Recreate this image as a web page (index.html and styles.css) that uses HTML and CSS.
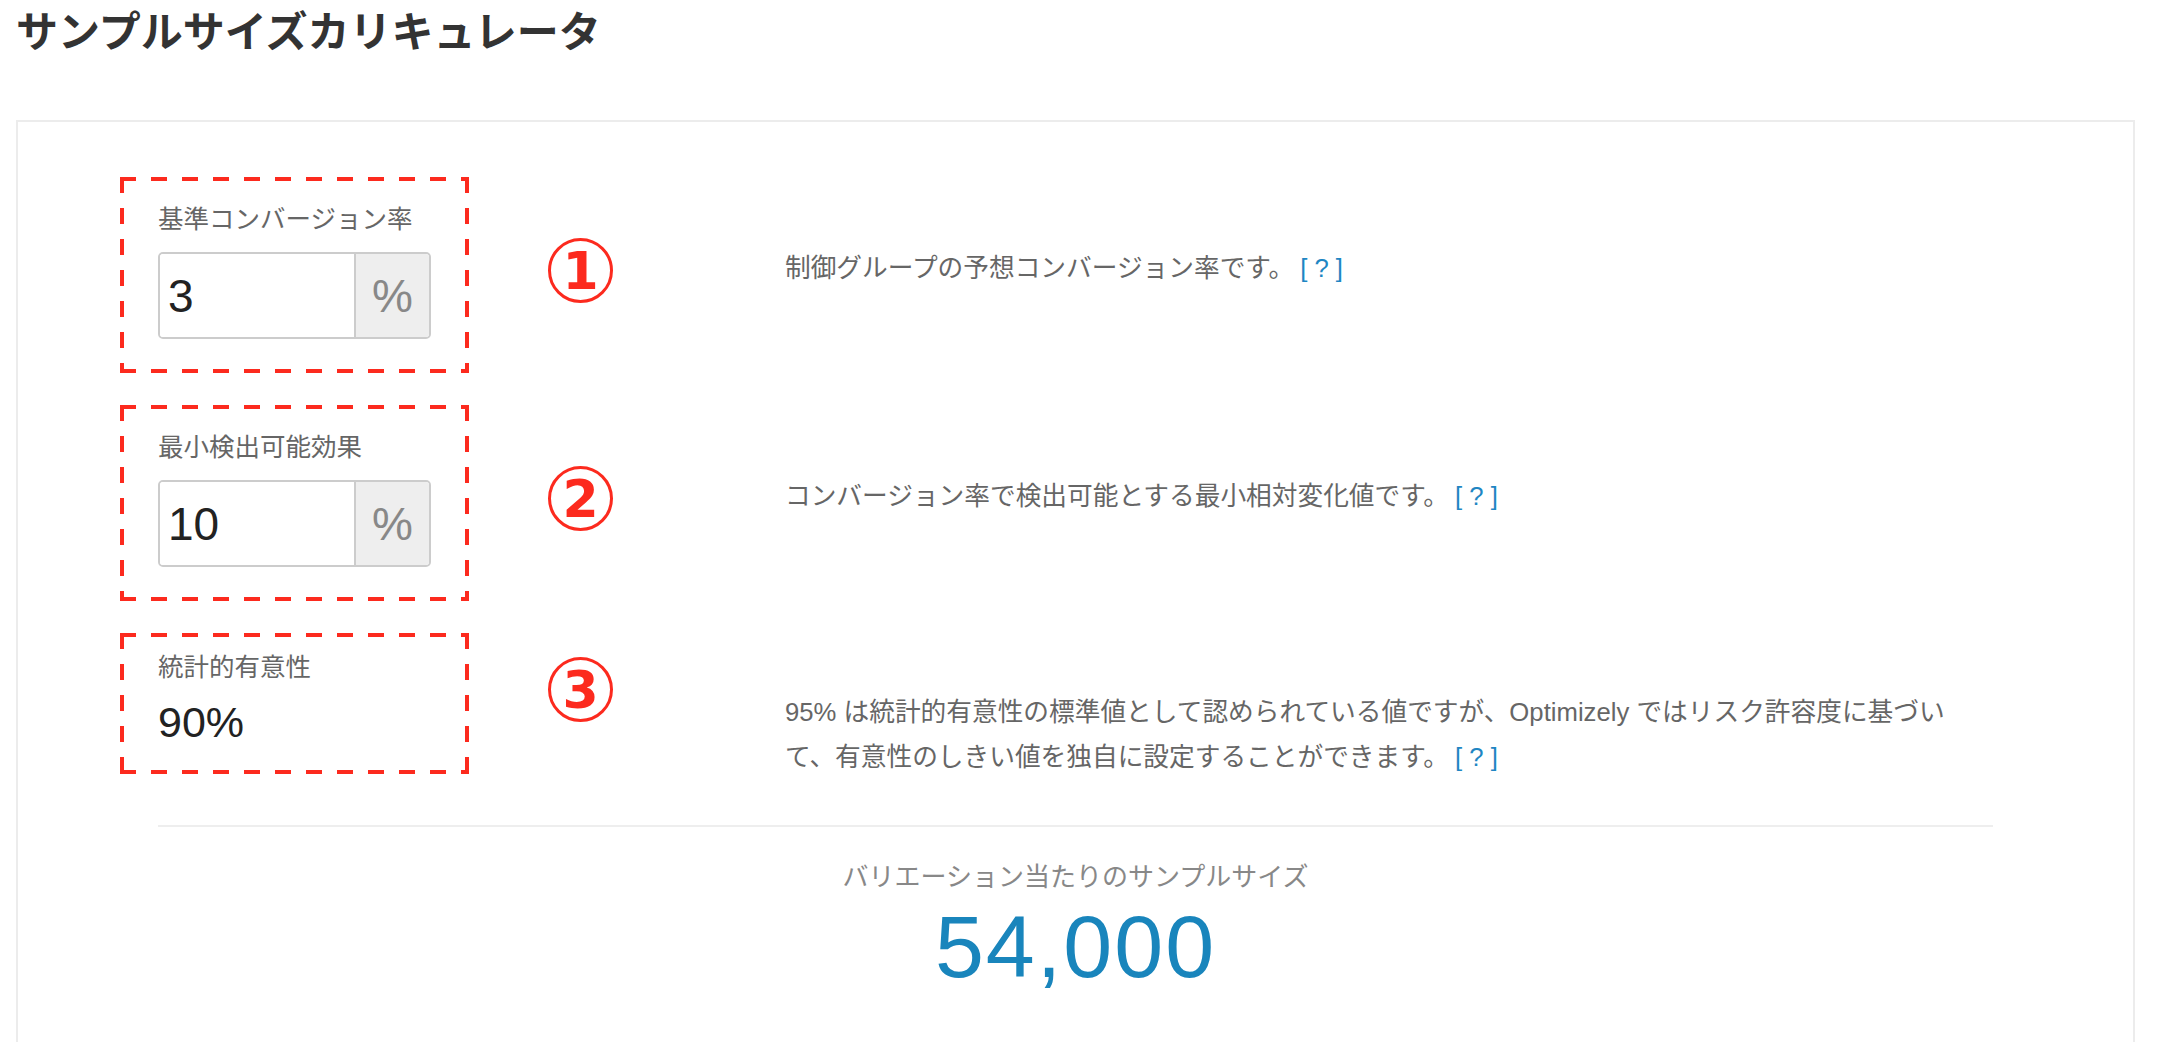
FILE: index.html
```html
<!DOCTYPE html>
<html lang="ja">
<head>
    <meta charset="UTF-8">
    <meta name="viewport" content="width=device-width, initial-scale=1.0">
    <title>サンプルサイズカリキュレータ</title>
    <link rel="stylesheet" href="styles.css">
</head>
<body>
    <h1 class="page-title">サンプルサイズカリキュレータ</h1>

    <div class="calc-panel">
        <div class="calc-row">
            <div class="field-box">
                <label class="field-label" for="baseline">基準コンバージョン率</label>
                <div class="input-group">
                    <input class="input-value" type="text" id="baseline" value="3">
                    <span class="input-addon">%</span>
                </div>
            </div>
            <div class="step-mark">1</div>
            <p class="field-help">制御グループの予想コンバージョン率です。<a href="#">[ ? ]</a></p>
        </div>

        <div class="calc-row">
            <div class="field-box">
                <label class="field-label" for="mde">最小検出可能効果</label>
                <div class="input-group">
                    <input class="input-value" type="text" id="mde" value="10">
                    <span class="input-addon">%</span>
                </div>
            </div>
            <div class="step-mark">2</div>
            <p class="field-help">コンバージョン率で検出可能とする最小相対変化値です。<a href="#">[ ? ]</a></p>
        </div>

        <div class="calc-row calc-row--static">
            <div class="field-box field-box--static">
                <div class="field-label">統計的有意性</div>
                <div class="static-value">90%</div>
            </div>
            <div class="step-mark">3</div>
            <p class="field-help">95% は統計的有意性の標準値として認められている値ですが、Optimizely ではリスク許容度に基づいて、有意性のしきい値を独自に設定することができます。<a href="#">[ ? ]</a></p>
        </div>

        <div class="result">
            <div class="result-label">バリエーション当たりのサンプルサイズ</div>
            <div class="result-value">54,000</div>
        </div>
    </div>
</body>
</html>
```

FILE: styles.css
```css
body {
    font-family: "Liberation Sans", "Noto Sans CJK JP", sans-serif;
    margin: 0;
    padding: 0 23px 0 16px;
    background: #fff;
    color: #666;
}
.page-title {
    margin: 0 0 62px;
    font-family: "Noto Sans CJK JP", sans-serif;
    font-size: 42px;
    line-height: 58px;
    font-weight: 700;
    color: #333;
}
.calc-panel {
    border: 2px solid #ececec;
    padding: 55px 140px 60px;
}
.calc-row {
    display: flex;
    align-items: flex-start;
}
.calc-row + .calc-row {
    margin-top: 32px;
}
/* red dashed frame, drawn with gradients so the dash length matches */
.field-box {
    box-sizing: border-box;
    width: 349px;
    margin-left: -38px;
    padding: 22px 0 34px 38px;
    flex-shrink: 0;
    background:
        repeating-linear-gradient(90deg, #fc2a1e 0 16px, transparent 16px 31px) left top / 100% 4px no-repeat,
        repeating-linear-gradient(90deg, #fc2a1e 0 16px, transparent 16px 31px) left bottom / 100% 4px no-repeat,
        repeating-linear-gradient(180deg, #fc2a1e 0 16px, transparent 16px 31px) left top / 4px 100% no-repeat,
        repeating-linear-gradient(180deg, #fc2a1e 0 16px, transparent 16px 31px) right top / 4px 100% no-repeat;
}
.field-box--static {
    padding: 14px 0 27px 38px;
}
.field-label {
    display: block;
    font-family: "Noto Sans CJK JP", sans-serif;
    font-size: 25.5px;
    line-height: 36px;
    color: #666;
    margin-bottom: 17px;
}
.field-box--static .field-label {
    margin-bottom: 14px;
}
.input-group {
    display: flex;
    box-sizing: border-box;
    width: 273px;
    height: 87px;
    border: 2px solid #ccc;
    border-radius: 5px;
    overflow: hidden;
}
.input-value {
    flex: 1;
    min-width: 0;
    border: none;
    outline: none;
    padding: 0 8px;
    font-family: "Liberation Sans", sans-serif;
    font-size: 46px;
    color: #222;
    background: #fff;
}
.input-addon {
    box-sizing: border-box;
    width: 75px;
    display: flex;
    align-items: center;
    justify-content: center;
    border-left: 2px solid #ccc;
    background: #eee;
    color: #888;
    font-size: 46px;
}
.static-value {
    font-size: 43px;
    line-height: 50px;
    color: #222;
}
.step-mark {
    box-sizing: border-box;
    width: 65px;
    height: 65px;
    margin: 61px 0 0 79px;
    border: 3px solid #fc2a1e;
    border-radius: 50%;
    display: flex;
    align-items: center;
    justify-content: center;
    font-family: "DejaVu Sans", sans-serif;
    font-weight: 700;
    font-size: 52px;
    color: #fc2a1e;
    flex-shrink: 0;
}
.field-help {
    flex: 1;
    margin: 69px 0 0 172px;
    padding-right: 20px;
    font-size: 25.7px;
    line-height: 45px;
    color: #666;
}
.field-help a {
    margin-left: 6px;
    color: #1f86c3;
    text-decoration: none;
}
.calc-row--static .step-mark {
    margin-top: 24px;
}
.calc-row--static .field-help {
    margin-top: 57px;
}
.result {
    margin-top: 45px;
    border-top: 2px solid #eee;
    padding-top: 30px;
    text-align: center;
}
.result-label {
    font-family: "Noto Sans CJK JP", sans-serif;
    font-size: 26px;
    line-height: 36px;
    color: #888;
}
.result-value {
    margin-top: 4px;
    font-size: 88px;
    line-height: 100px;
    letter-spacing: 2px;
    color: #1985bc;
}
```
